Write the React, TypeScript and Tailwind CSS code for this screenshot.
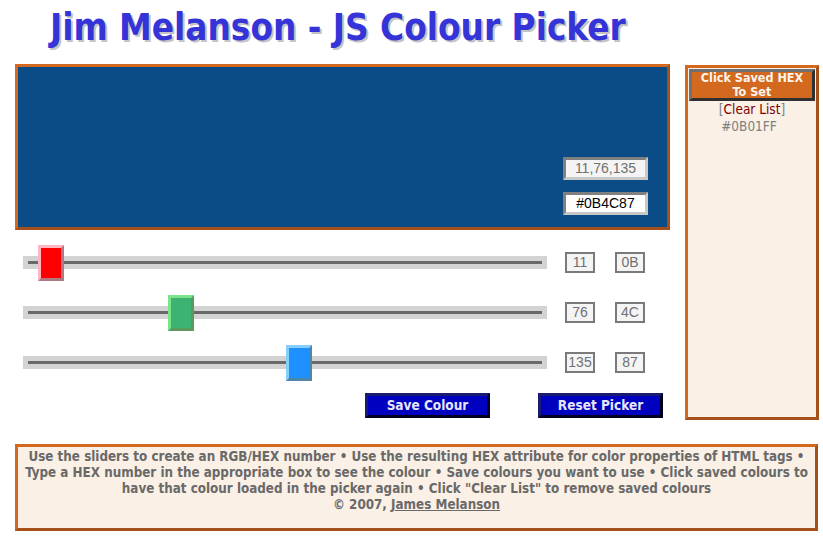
import type { CSSProperties } from "react";

// Values shown in the reference: rgb(11, 76, 135)
const channels = [
  { dec: "11", hex: "0B", value: 11, face: "bg-[#ff0000]", light: "border-t-[#ffb6c1] border-l-[#ffb6c1]", dark: "border-b-[#b07a82] border-r-[#b07a82]" },
  { dec: "76", hex: "4C", value: 76, face: "bg-[#3cb371]", light: "border-t-[#7de38a] border-l-[#7de38a]", dark: "border-b-[#5a9a5e] border-r-[#5a9a5e]" },
  { dec: "135", hex: "87", value: 135, face: "bg-[#1e90ff]", light: "border-t-[#87cefa] border-l-[#87cefa]", dark: "border-b-[#4f86a8] border-r-[#4f86a8]" },
];

const tahoma = "font-['DejaVu_Sans_Condensed','DejaVu_Sans',sans-serif]";

export default function App() {
  return (
    <div className={`min-h-[541px] w-[823px] bg-white ${tahoma}`}>
      <h1 className="pl-[50px] pt-[6px] text-[36.5px] font-bold leading-[44px] text-[#3434d9] [text-shadow:2px_2px_0_#c4c4c4]">
        Jim Melanson - JS Colour Picker
      </h1>

      <div className="mt-[14px] flex items-start pl-[15px]">
        <div className="flex w-[655px] flex-col">
          <ColourPanel />
          <div className="mt-[7px] flex flex-col">
            {channels.map((c) => (
              <SliderRow key={c.hex} {...c} />
            ))}
          </div>
          <div className="mt-[6px] flex gap-[48px] pl-[350px]">
            <PickerButton label="Save Colour" />
            <PickerButton label="Reset Picker" />
          </div>
        </div>
        <SavedList />
      </div>

      <footer className="ml-[15px] mr-[5px] mt-[24px] h-[87px] border-[3px] border-t-[#d2691e] border-l-[#d2691e] border-b-[#a5501a] border-r-[#a5501a] bg-[#faf0e6] pt-[2px] text-center text-[13.3px] font-bold leading-[16px] text-[#696969]">
        Use the sliders to create an RGB/HEX number &bull; Use the resulting HEX attribute for color properties of HTML tags &bull;
        <br />
        Type a HEX number in the appropriate box to see the colour &bull; Save colours you want to use &bull; Click saved colours to
        <br />
        have that colour loaded in the picker again &bull; Click "Clear List" to remove saved colours
        <br />
        &copy; 2007, <a className="underline">James Melanson</a>
      </footer>
    </div>
  );
}

function ColourPanel() {
  return (
    <div className="flex h-[166px] flex-col items-end justify-end gap-[12px] border-[3px] border-t-[#d2691e] border-l-[#d2691e] border-b-[#a5501a] border-r-[#a5501a] bg-[#0b4c87] pr-[19px] pb-[12px]">
      <div className="flex h-[23px] w-[85px] items-center justify-center border-[3px] border-t-[#808080] border-l-[#808080] border-b-[#c8c8c8] border-r-[#c8c8c8] bg-[#f4f4f4] font-['Liberation_Sans',sans-serif] text-[14px] text-[#707070]">
        11,76,135
      </div>
      <div className="flex h-[23px] w-[85px] items-center justify-center border-[3px] border-t-[#808080] border-l-[#808080] border-b-[#c8c8c8] border-r-[#c8c8c8] bg-white font-['Liberation_Sans',sans-serif] text-[14px] text-black">
        #0B4C87
      </div>
    </div>
  );
}

function SliderRow({
  dec,
  hex,
  value,
  face,
  light,
  dark,
}: {
  dec: string;
  hex: string;
  value: number;
  face: string;
  light: string;
  dark: string;
}) {
  // thumb offset relative to track start, 2px per unit
  const thumb: CSSProperties = { left: -7 + value * 2 };
  return (
    <div className="flex h-[50px] items-center pl-[8px]">
      <div className="relative flex h-[13px] w-[524px] items-center bg-[#d3d3d3] px-[5px]">
        <div className="h-[3px] w-full bg-[#696969]" />
        <div
          className={`absolute top-[-11px] h-[36px] w-[26px] border-[3px] ${face} ${light} ${dark}`}
          style={thumb}
        />
      </div>
      <NumBox text={dec} className="ml-[18px]" />
      <NumBox text={hex} className="ml-[20px]" />
    </div>
  );
}

function NumBox({ text, className }: { text: string; className?: string }) {
  return (
    <div
      className={`flex h-[21px] w-[30px] items-center justify-center border-2 border-[#7a7a7a] bg-[#f4f4f4] font-['Liberation_Sans',sans-serif] text-[14px] text-[#707070] ${className ?? ""}`}
    >
      {text}
    </div>
  );
}

function PickerButton({ label }: { label: string }) {
  return (
    <button className="flex h-[25px] w-[125px] items-center justify-center border-[3px] border-t-[#1a1a6e] border-l-[#1a1a6e] border-b-[#000020] border-r-[#000020] bg-[#0000c0] text-[13.5px] font-bold text-[#e6e6fa]">
      {label}
    </button>
  );
}

function SavedList() {
  return (
    <aside className="ml-[15px] mt-[1px] h-[355px] w-[134px] border-[3px] border-t-[#d2691e] border-l-[#d2691e] border-b-[#a5501a] border-r-[#a5501a] bg-[#faf0e6] p-px text-center text-[13.5px]">
      <div className="flex h-[32px] flex-col items-center justify-center border-[3px] border-t-[#707070] border-l-[#707070] border-b-[#303030] border-r-[#303030] bg-[#d2691e] text-[12.5px] font-bold leading-[14px] text-[#fff5ee]">
        <span>Click Saved HEX</span>
        <span>To Set</span>
      </div>
      <div className="leading-[17px] text-[#808080]">
        [<span className="text-[#800000]">Clear List</span>]
      </div>
      <div className="pr-[6px] leading-[17px] text-[#808080]">#0B01FF</div>
    </aside>
  );
}
